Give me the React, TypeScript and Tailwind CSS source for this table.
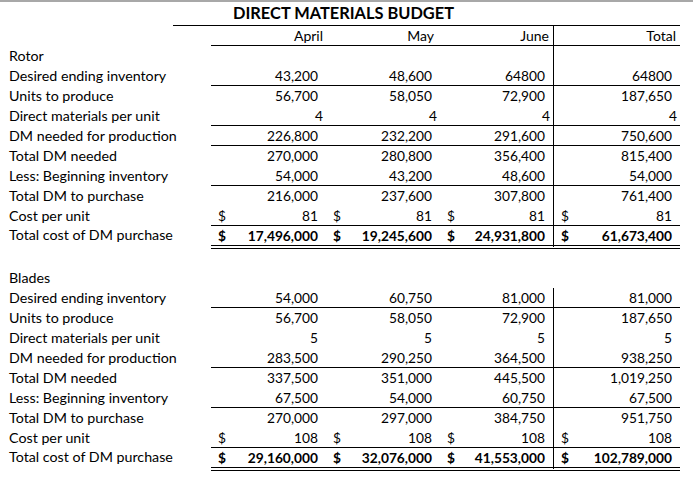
type Fmt = "acct" | "gen";

interface Row {
  label: string;
  vals: string[];
  fmt?: Fmt;
  dollar?: boolean;
  bold?: boolean;
  line?: "single" | "double";
  vline?: boolean;
}

const rotor: Row[] = [
  { label: "Rotor", vals: ["", "", "", ""], vline: true },
  { label: "Desired ending inventory", vals: ["43,200", "48,600", "64800", "64800"], line: "single", vline: true },
  { label: "Units to produce", vals: ["56,700", "58,050", "72,900", "187,650"], vline: true },
  { label: "Direct materials per unit", vals: ["4", "4", "4", "4"], fmt: "gen", line: "single", vline: true },
  { label: "DM needed for production", vals: ["226,800", "232,200", "291,600", "750,600"], line: "single", vline: true },
  { label: "Total DM needed", vals: ["270,000", "280,800", "356,400", "815,400"], vline: true },
  { label: "Less: Beginning inventory", vals: ["54,000", "43,200", "48,600", "54,000"], line: "single", vline: true },
  { label: "Total DM to purchase", vals: ["216,000", "237,600", "307,800", "761,400"], vline: true },
  { label: "Cost per unit", vals: ["81", "81", "81", "81"], dollar: true, line: "single", vline: true },
  { label: "Total cost of DM purchase", vals: ["17,496,000", "19,245,600", "24,931,800", "61,673,400"], dollar: true, bold: true, line: "double", vline: true },
];

const blades: Row[] = [
  { label: "Blades", vals: ["", "", "", ""] },
  { label: "Desired ending inventory", vals: ["54,000", "60,750", "81,000", "81,000"], line: "single", vline: true },
  { label: "Units to produce", vals: ["56,700", "58,050", "72,900", "187,650"], vline: true },
  { label: "Direct materials per unit", vals: ["5", "5", "5", "5"], vline: true },
  { label: "DM needed for production", vals: ["283,500", "290,250", "364,500", "938,250"], line: "single", vline: true },
  { label: "Total DM needed", vals: ["337,500", "351,000", "445,500", "1,019,250"], vline: true },
  { label: "Less: Beginning inventory", vals: ["67,500", "54,000", "60,750", "67,500"], line: "single", vline: true },
  { label: "Total DM to purchase", vals: ["270,000", "297,000", "384,750", "951,750"], vline: true },
  { label: "Cost per unit", vals: ["108", "108", "108", "108"], dollar: true, line: "single", vline: true },
  { label: "Total cost of DM purchase", vals: ["29,160,000", "32,076,000", "41,553,000", "102,789,000"], dollar: true, bold: true, line: "double", vline: true },
];

function BudgetRow({ row }: { row: Row }) {
  const double = row.line === "double";
  const h = double ? "h-[23px]" : "h-5";
  const lineCls =
    row.line === "double"
      ? "border-b-4 border-double border-black"
      : row.line === "single"
      ? "border-b border-black"
      : "";
  const weight = row.bold ? "font-bold" : "";
  return (
    <div className={`grid grid-cols-[211px_115px_114px_113px_127px] ${h}`}>
      <div className={`flex items-center pl-[9px] text-[14.25px] ${double ? "pb-1" : ""}`}>{row.label}</div>
      {row.vals.map((v, i) => (
        <div
          key={i}
          className={`flex items-center justify-between ${lineCls} ${weight} ${
            i === 3 && row.vline ? "border-l border-l-black" : ""
          } ${row.fmt === "gen" ? "pr-[3px]" : "pr-2"} pl-[7px]`}
        >
          <span>{row.dollar ? "$" : ""}</span>
          <span>{v}</span>
        </div>
      ))}
    </div>
  );
}

export default function App() {
  return (
    <div className="w-[693px] h-[478px] bg-white text-black text-[13.75px] leading-none [font-family:Lato,sans-serif] overflow-hidden">
      <div className="h-[2px] bg-[#a8a8a8]" />
      {/* Title */}
      <div className="ml-[173px] w-[507px] h-6 border-b border-black flex items-center pl-[60px] font-bold text-[16.4px]">
        DIRECT MATERIALS BUDGET
      </div>
      {/* Month headers */}
      <div className="grid grid-cols-[211px_115px_114px_113px_127px] h-5 text-[14px]">
        <div />
        <div className="flex items-center justify-end pr-[3px] border-b border-black">April</div>
        <div className="flex items-center justify-end pr-[6px] border-b border-black">May</div>
        <div className="flex items-center justify-end pr-[4px] border-b border-black">June</div>
        <div className="flex items-center justify-end pr-[4px] border-b border-l border-black">Total</div>
      </div>
      {rotor.map((r) => (
        <BudgetRow key={"r" + r.label} row={r} />
      ))}
      <div className="h-[19px]" />
      {blades.map((r) => (
        <BudgetRow key={"b" + r.label} row={r} />
      ))}
    </div>
  );
}
